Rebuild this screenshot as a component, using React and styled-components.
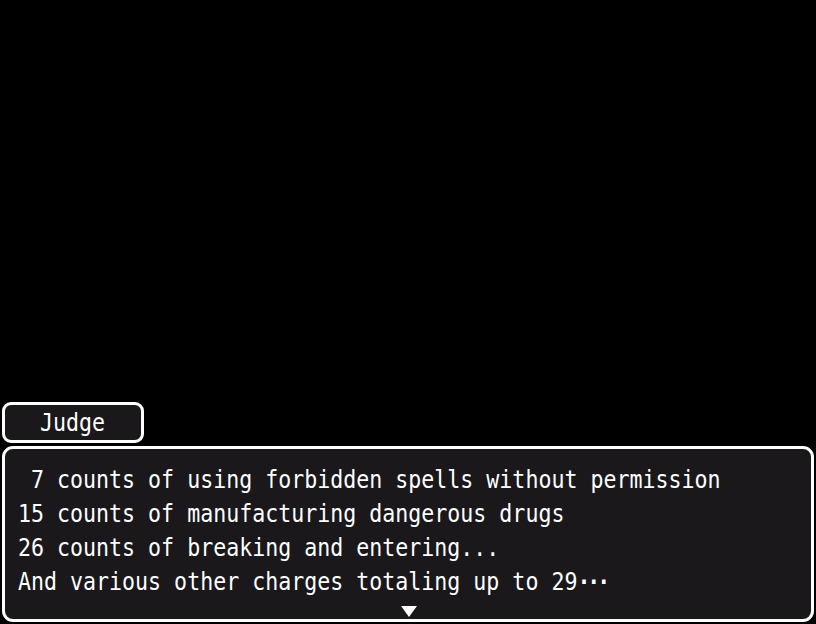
import React from 'react'
import styled, { createGlobalStyle } from 'styled-components'

const GlobalStyle = createGlobalStyle`
    html, body {
        margin: 0;
        padding: 0;
        background: #000;
    }
    #root {
        height: 624px;
    }
`

const lines = [
    { text: ' 7 counts of using forbidden spells without permission' },
    { text: '15 counts of manufacturing dangerous drugs' },
    { text: '26 counts of breaking and entering...' },
    { text: 'And various other charges totaling up to 29', trailing: true },
]

function App(){
    return (
        <Screen>
            <GlobalStyle />
            <NameBox>
                <GameText>Judge</GameText>
            </NameBox>
            <MessageBox>
                <Lines>
                    {lines.map((line, i) => (
                        <Line key={i}>
                            <GameText>
                                {line.text}
                                {line.trailing && <Dots>{'\u00b7\u00b7\u00b7'}</Dots>}
                            </GameText>
                        </Line>
                    ))}
                </Lines>
                <PauseArrow />
            </MessageBox>
        </Screen>
    )
}

export default App

const Screen = styled.div`
    height: 624px;
    box-sizing: border-box;
    padding: 2px;
    display: flex;
    flex-direction: column;
    justify-content: flex-end;
    gap: 3px;
    background: #000;
    color: #fff;
    font-family: "DejaVu Sans Mono", "Liberation Mono", monospace;
    font-size: 24.5px;
`
const GameText = styled.span`
    display: inline-block;
    white-space: pre;
    transform: scaleX(0.882);
    transform-origin: left center;
`
const Dots = styled.span`
    letter-spacing: -3.5px;
    font-weight: bold;
`
const NameBox = styled.div`
    width: 142px;
    height: 41px;
    box-sizing: border-box;
    border: 3px solid #fff;
    border-radius: 9px;
    background: #1a181b;
    display: flex;
    justify-content: center;
    line-height: 30px;
    padding-left: 8px;
    padding-top: 3px;
    padding-bottom: 2px;
`
const MessageBox = styled.div`
    position: relative;
    height: 176px;
    box-sizing: border-box;
    border: 3px solid #fff;
    border-radius: 11px;
    background: #1a181b;
    padding: 14px 13px 0;
`
const Lines = styled.div`
    display: flex;
    flex-direction: column;
`
const Line = styled.div`
    height: 34px;
    line-height: 34px;
`
const PauseArrow = styled.div`
    position: absolute;
    left: 396px;
    bottom: 2px;
    width: 0;
    height: 0;
    border-left: 8.5px solid transparent;
    border-right: 8.5px solid transparent;
    border-top: 11px solid #fff;
`
